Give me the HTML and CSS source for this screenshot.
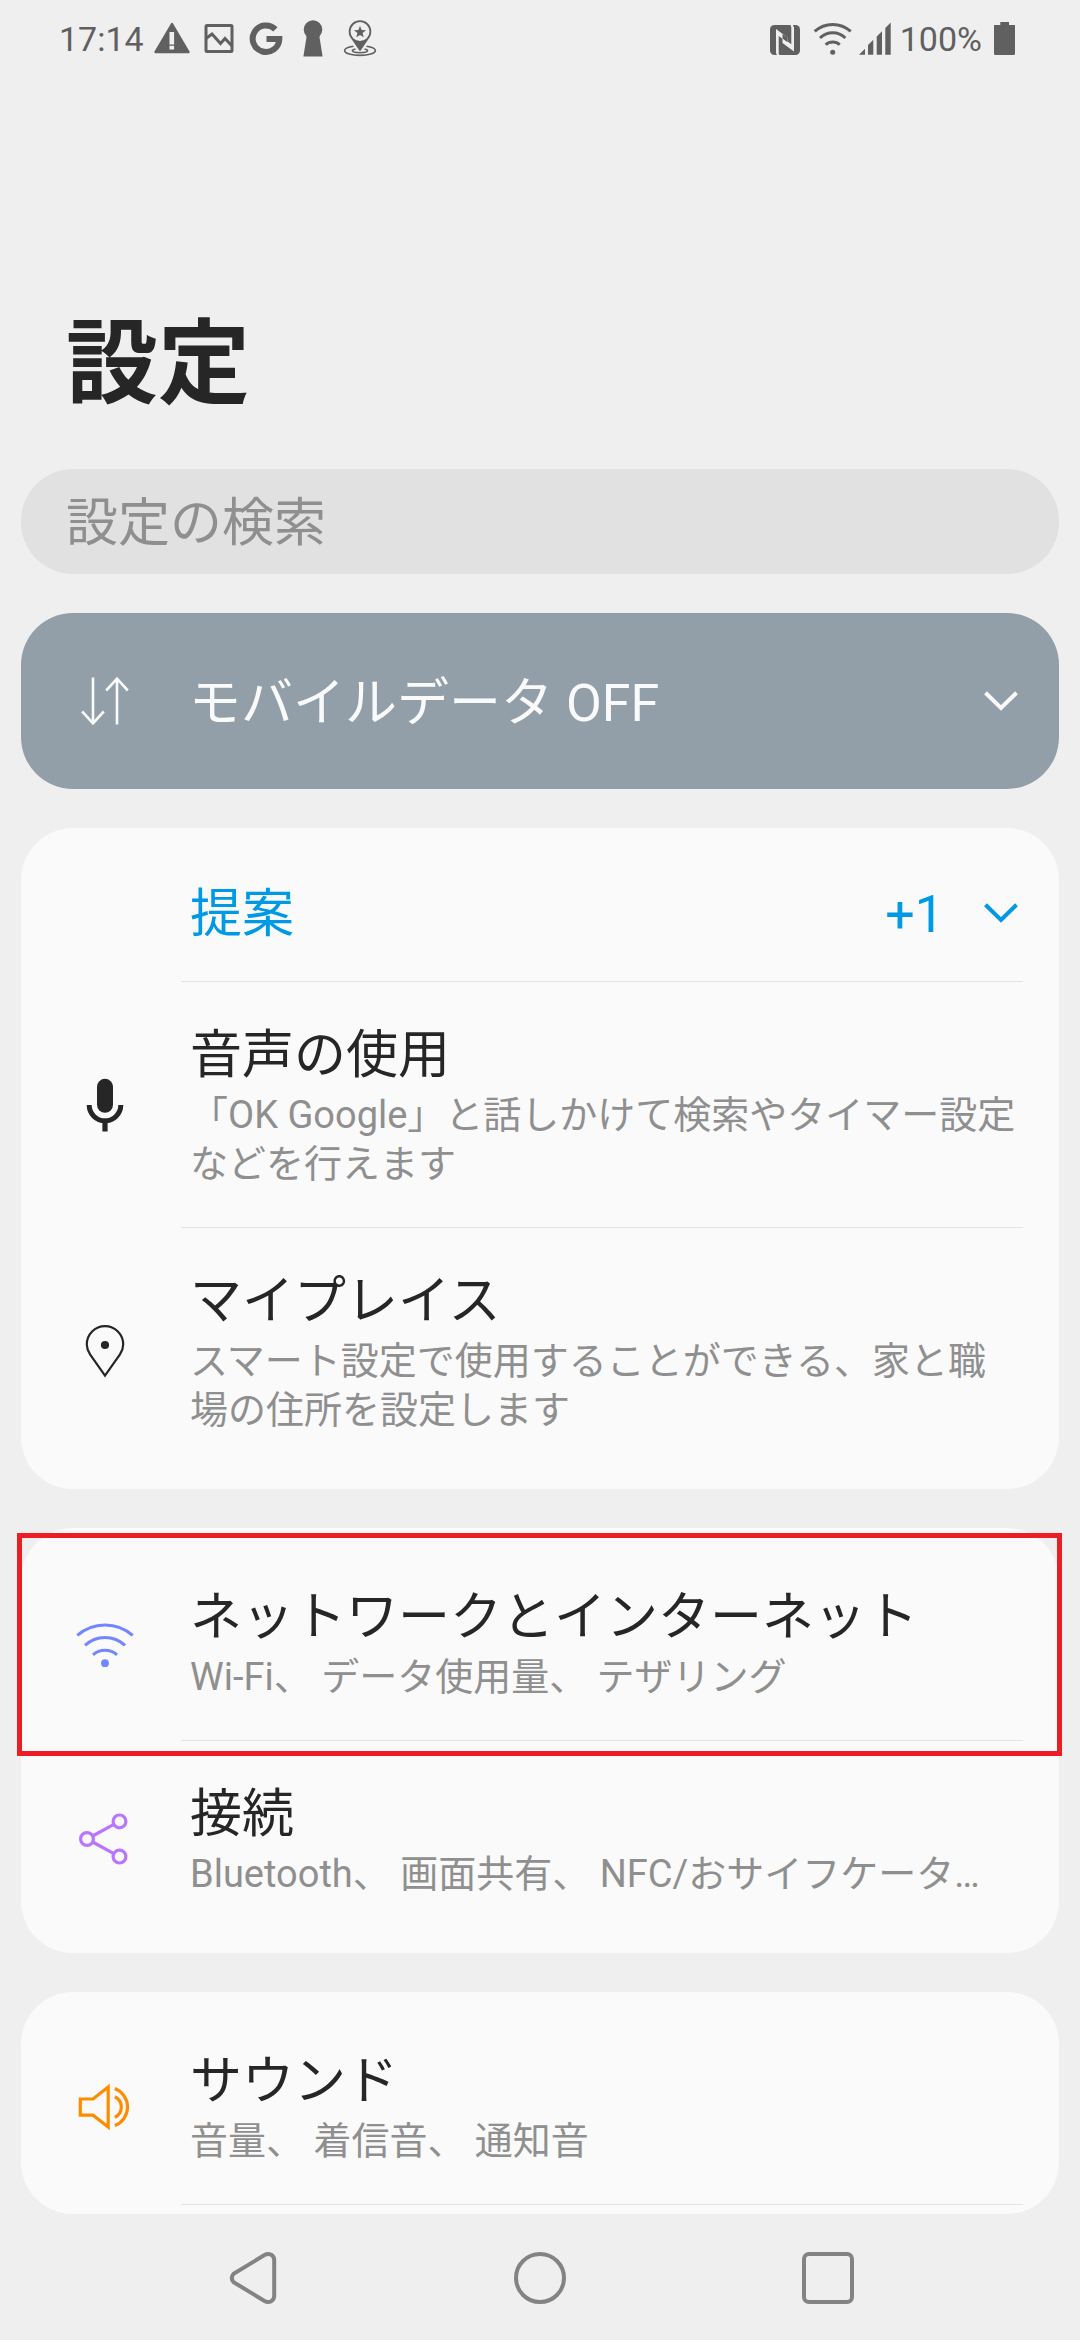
FILE: index.html
```html
<!DOCTYPE html>
<html lang="ja">
<head>
  <meta charset="utf-8">
  <meta name="viewport" content="width=device-width, initial-scale=1">
  <title>設定</title>
  <link rel="stylesheet" href="styles.css">
</head>
<body>
  <div class="screen">
    <header class="status">
      <div class="status-left">
        <time class="clock">17:14</time>
        <div class="notices">
          <svg class="notice" viewBox="0 0 40 40" aria-hidden="true">
            <path d="M20 5 L36.5 33 H3.5 Z" fill="currentColor" stroke="currentColor" stroke-width="2.4" stroke-linejoin="round"/>
            <path d="M17.5 13 h4.6 v12.4 h-4.6z M17.5 26.8 h4.6 v3.8 h-4.6z" fill="#efefef"/>
          </svg>
          <svg class="notice" viewBox="0 0 40 40" aria-hidden="true" fill="none" stroke="currentColor" stroke-width="3">
            <rect x="7" y="6.5" width="26" height="26" rx="1"/>
            <path d="M7 19.5 L13 15 L21.5 24.5 L26 19.5 L33 27"/>
          </svg>
          <svg class="notice" viewBox="0 0 40 40" aria-hidden="true" fill="none" stroke="currentColor" stroke-width="6">
            <path d="M29.4 10.3 A13.3 13.3 0 1 0 33.3 20 H20.5"/>
          </svg>
          <svg class="notice" viewBox="0 0 40 40" aria-hidden="true" fill="currentColor">
            <circle cx="20" cy="10.6" r="9.3"/>
            <path d="M14 15 H26 L29.6 37.4 H10.4 Z"/>
          </svg>
          <svg class="notice" viewBox="0 0 40 40" aria-hidden="true" fill="none" stroke="currentColor">
            <path d="M13.5 27.2 C8 28 4.6 29.6 4.6 31.6 C4.6 34.5 11.5 36.4 20 36.4 C28.5 36.4 35.4 34.5 35.4 31.6 C35.4 29.6 32 28 26.5 27.2" stroke-width="1.6"/>
            <path d="M15.5 30 C13.5 30.4 12.4 31 12.4 31.6 C12.4 32.8 15.5 33.8 20 33.8 C24.5 33.8 27.6 32.8 27.6 31.6 C27.6 31 26.5 30.4 24.5 30" stroke-width="1.6"/>
            <circle cx="20" cy="12.6" r="10.4" stroke-width="1.8"/>
            <path d="M11.5 20 Q20 25 28.5 20 L20 32.5 Z" fill="currentColor" stroke="none"/>
            <path d="M20 6.8 L21.6 11.1 L26 11.3 L22.6 14.1 L23.7 18.3 L20 15.9 L16.3 18.3 L17.4 14.1 L14 11.3 L18.4 11.1 Z" fill="currentColor" stroke="none"/>
          </svg>
        </div>
      </div>
      <div class="status-right">
        <svg class="nfc" viewBox="0 0 30 40" aria-hidden="true">
          <rect x="0" y="6" width="30" height="30" rx="4.5" fill="currentColor"/>
          <path d="M6 10 L17.5 18.5 V23.5 L8.7 17 V34.5 L10 37 H7.5 L6 34 Z" fill="#efefef"/>
          <path d="M24 32.5 L12.5 24 V18.5 L21.3 25.2 V8 L20 5 H22.5 L24 8.5 Z" fill="#efefef"/>
          <path d="M12.5 19.5 L17.5 23.2 V18.5 L12.5 15 Z" fill="currentColor"/>
        </svg>
        <svg class="wifi-small" viewBox="0 0 40 40" aria-hidden="true" fill="none" stroke="currentColor" stroke-width="3">
          <path d="M1.7 12.4 A26.6 26.6 0 0 1 37.7 12.4"/>
          <path d="M7 19 A18 18 0 0 1 32.4 19"/>
          <path d="M12.7 25.8 A10 10 0 0 1 26.7 25.8"/>
          <circle cx="19.7" cy="33.2" r="2.5" fill="currentColor" stroke="none"/>
        </svg>
        <svg class="signal" viewBox="0 0 33 40" aria-hidden="true" fill="currentColor">
          <path d="M0 35.7 L6 29.7 V35.7 Z M9 35.7 V26 L14.3 20.7 V35.7 Z M17.7 35.7 V17.6 L23 12.3 V35.7 Z M26.3 35.7 V9 L31.7 3.6 V35.7 Z"/>
        </svg>
        <span class="percent">100%</span>
        <svg class="battery" viewBox="0 0 21 40" aria-hidden="true" fill="currentColor">
          <path d="M6.3 3 H15 V6 H21 V34.5 Q21 36 19.5 36 H1.5 Q0 36 0 34.5 V6 H6.3 Z"/>
        </svg>
      </div>
    </header>

    <main class="content">
      <h1 class="title">設定</h1>
      <input class="search" type="search" placeholder="設定の検索" aria-label="設定の検索">

      <button class="data-banner" type="button">
        <svg class="icon" viewBox="0 0 60 60" aria-hidden="true" fill="none" stroke="currentColor" stroke-width="2.6">
          <path d="M18 6.5 V52 M7.2 40.5 L18 52.3 L28.8 40.5"/>
          <path d="M42 53.5 V8 M31.2 19.5 L42 7.7 L52.8 19.5"/>
        </svg>
        <span class="head-text head-grow">モバイルデータ OFF</span>
        <svg class="chevron" viewBox="0 0 36 20" aria-hidden="true"><path d="M2.5 1.8 L18 17 L33.5 1.8"/></svg>
      </button>

      <section class="card">
        <button class="suggest" type="button">
          <span class="head-text head-grow">提案</span>
          <span class="head-text suggest-count">+1</span>
          <svg class="chevron" viewBox="0 0 36 20" aria-hidden="true"><path d="M2.5 1.8 L18 17 L33.5 1.8"/></svg>
        </button>
        <ul class="list">
          <li>
            <a class="row" href="#voice">
              <svg class="icon" viewBox="0 0 60 60" aria-hidden="true">
                <rect x="22" y="3.8" width="16" height="34" rx="8" fill="currentColor"/>
                <path d="M14.2 30 A15.8 15.8 0 0 0 45.8 30" fill="none" stroke="currentColor" stroke-width="5"/>
                <path d="M27.4 47 h5.2 v9.6 h-5.2z" fill="currentColor"/>
              </svg>
              <span class="row-body">
                <span class="row-title">音声の使用</span>
                <span class="row-sub">「OK Google」と話しかけて検索やタイマー設定などを行えます</span>
              </span>
            </a>
          </li>
          <li>
            <a class="row row-last" href="#places">
              <svg class="icon" viewBox="0 0 60 60" aria-hidden="true">
                <path d="M30 54.6 L15.2 33.6 Q11.8 28.6 11.8 23.4 A18.2 18.2 0 0 1 48.2 23.4 Q48.2 28.6 44.8 33.6 Z" fill="none" stroke="currentColor" stroke-width="2.2"/>
                <circle cx="30" cy="24" r="4.1" fill="currentColor"/>
              </svg>
              <span class="row-body">
                <span class="row-title">マイプレイス</span>
                <span class="row-sub">スマート設定で使用することができる、家と職場の住所を設定します</span>
              </span>
            </a>
          </li>
        </ul>
      </section>

      <section class="card">
        <ul class="list">
          <li class="marked">
            <a class="row" href="#network">
              <svg class="icon icon-network" viewBox="0 0 60 60" aria-hidden="true" fill="none" stroke="currentColor" stroke-width="3">
                <path d="M2.3 22.4 A41.8 41.8 0 0 1 57.7 22.4"/>
                <path d="M10 32.4 A29 29 0 0 1 50 32.4"/>
                <path d="M18 41.8 A18 18 0 0 1 42 41.8"/>
                <circle cx="30" cy="50.2" r="3.9" fill="currentColor" stroke="none"/>
              </svg>
              <span class="row-body">
                <span class="row-title">ネットワークとインターネット</span>
                <span class="row-sub">Wi-Fi、 データ使用量、 テザリング</span>
              </span>
            </a>
          </li>
          <li>
            <a class="row row-last" href="#connection">
              <svg class="icon icon-share" viewBox="0 0 60 60" aria-hidden="true" fill="none" stroke="currentColor" stroke-width="3.2">
                <circle cx="12" cy="30" r="6.4"/>
                <circle cx="44.5" cy="12.4" r="6.4"/>
                <circle cx="44.5" cy="47.6" r="6.4"/>
                <path d="M17.6 27 L38.9 15.4 M17.6 33 L38.9 44.6"/>
              </svg>
              <span class="row-body">
                <span class="row-title">接続</span>
                <span class="row-sub">Bluetooth、 画面共有、 NFC/おサイフケータ…</span>
              </span>
            </a>
          </li>
        </ul>
      </section>

      <section class="card card-cut">
        <ul class="list">
          <li>
            <a class="row" href="#sound">
              <svg class="icon icon-sound" viewBox="0 0 60 60" aria-hidden="true" fill="none" stroke="currentColor" stroke-width="3.2">
                <path d="M5.3 22 H18 L33.2 10 V50 L18 38.2 H5.3 Z"/>
                <path d="M39.8 19.8 A11.4 11.4 0 0 1 39.8 40.4"/>
                <path d="M39.8 11.6 A19.8 19.8 0 0 1 39.8 48.6"/>
              </svg>
              <span class="row-body">
                <span class="row-title">サウンド</span>
                <span class="row-sub">音量、 着信音、 通知音</span>
              </span>
            </a>
          </li>
        </ul>
      </section>
    </main>

    <nav class="navbar" aria-label="ナビゲーション">
      <button class="nav-button" type="button" aria-label="戻る">
        <svg viewBox="0 0 56 56" aria-hidden="true"><path d="M40.5 5.1 Q44 3.2 47.2 4.8 Q50.2 6.6 50.2 10 V46 Q50.2 49.4 47.2 51.2 Q44 52.8 40.5 50.9 L9.6 32.2 Q6 28 9.6 23.8 Z"/></svg>
      </button>
      <button class="nav-button" type="button" aria-label="ホーム">
        <svg viewBox="0 0 56 56" aria-hidden="true"><circle cx="28" cy="28" r="24"/></svg>
      </button>
      <button class="nav-button" type="button" aria-label="履歴">
        <svg viewBox="0 0 56 56" aria-hidden="true"><rect x="4" y="4" width="48" height="48" rx="5"/></svg>
      </button>
    </nav>
  </div>
</body>
</html>
```
FILE: styles.css
```css
* {
  box-sizing: border-box;
}

body {
  margin: 0;
  background: #efefef;
  color: #262626;
  font-family: Roboto, "Noto Sans CJK JP", sans-serif;
}

button {
  border: 0;
  background: none;
  padding: 0;
  font: inherit;
  color: inherit;
  text-align: left;
}

svg {
  display: block;
  flex: none;
}

.screen {
  min-height: 100vh;
  display: flex;
  flex-direction: column;
}

/* Status bar */
.status {
  display: flex;
  justify-content: space-between;
  align-items: center;
  height: 78px;
  padding: 0 65px 0 59px;
  color: #606060;
  font-size: 34px;
  line-height: 40px;
}

.status-left,
.status-right,
.notices {
  display: flex;
  align-items: center;
}

.status-left {
  gap: 8px;
}

.notices {
  gap: 7px;
}

.notice {
  width: 40px;
  height: 40px;
}

.nfc {
  width: 30px;
  height: 40px;
  margin-right: 13px;
}

.wifi-small {
  width: 40px;
  height: 40px;
  margin-right: 6px;
}

.signal {
  width: 33px;
  height: 40px;
  margin-right: 8px;
}

.percent {
  margin-right: 12px;
}

.battery {
  width: 21px;
  height: 40px;
}

/* Page content */
.content {
  flex: 1;
  display: flex;
  flex-direction: column;
  gap: 39px;
  padding: 225px 21px 0;
}

.title {
  margin: 0 0 3px 45px;
  font-size: 92px;
  line-height: 124px;
  font-weight: 700;
}

.search {
  width: 100%;
  height: 105px;
  padding: 4px 45px 0;
  border: 0;
  border-radius: 52px;
  background: #e1e1e1;
  color: #262626;
  font: inherit;
  font-size: 52px;
  appearance: none;
}

.search::placeholder {
  color: #8f8f8f;
  opacity: 1;
}

.data-banner {
  display: flex;
  align-items: center;
  height: 176px;
  padding-right: 40px;
  border-radius: 52px;
  background: #929fa8;
  color: #fafafa;
}

.head-text {
  padding-top: 4px;
  font-size: 52px;
  line-height: 71px;
}

.head-grow {
  flex: 1;
}

.chevron {
  width: 36px;
  height: 20px;
  fill: none;
  stroke: currentColor;
  stroke-width: 4;
}

/* Cards */
.card {
  padding: 16px 0;
  border-radius: 52px;
  background: #fafafa;
}

.card-cut {
  padding-bottom: 9px;
}

.suggest {
  display: flex;
  align-items: center;
  width: 100%;
  height: 137px;
  padding: 0 40px 0 169px;
  color: #0099e5;
}

.suggest-count {
  margin-right: 39px;
}

.suggest + .list {
  margin-left: 160px;
  margin-right: 36px;
  border-top: 1px solid #e3e3e3;
}

.suggest + .list .row {
  margin-left: -160px;
  margin-right: -36px;
}

.list {
  margin: 0;
  padding: 0;
  list-style: none;
}

.row {
  display: flex;
  align-items: center;
  color: inherit;
  text-decoration: none;
}

.icon {
  width: 60px;
  height: 60px;
  margin: 0 46px 0 54px;
}

.data-banner .icon {
  margin-right: 54px;
}

.icon-network {
  color: #7186ff;
}

.icon-share {
  color: #b876ff;
}

.icon-sound {
  color: #ff8c00;
}

.row-body {
  flex: 1;
  min-width: 0;
  display: flex;
  flex-direction: column;
  margin-right: 36px;
  padding: 38px 0 38px 9px;
  border-bottom: 1px solid #e3e3e3;
}

.row-last .row-body {
  border-bottom: 0;
}

.row-title {
  font-size: 52px;
  line-height: 71px;
}

.row-sub {
  color: #8f8f8f;
  font-size: 38px;
  line-height: 49px;
}

/* Outline that calls out one entry */
.marked {
  position: relative;
}

.marked::after {
  content: "";
  position: absolute;
  inset: -11px -3px -15px -4px;
  border: 5px solid #ee1c24;
  pointer-events: none;
}

/* Navigation bar */
.navbar {
  display: grid;
  grid-template-columns: repeat(3, 1fr);
  height: 127px;
  padding: 0 10%;
}

.nav-button {
  display: flex;
  align-items: center;
  justify-content: center;
}

.nav-button svg {
  width: 56px;
  height: 56px;
  fill: none;
  stroke: #838383;
  stroke-width: 4;
}
```
